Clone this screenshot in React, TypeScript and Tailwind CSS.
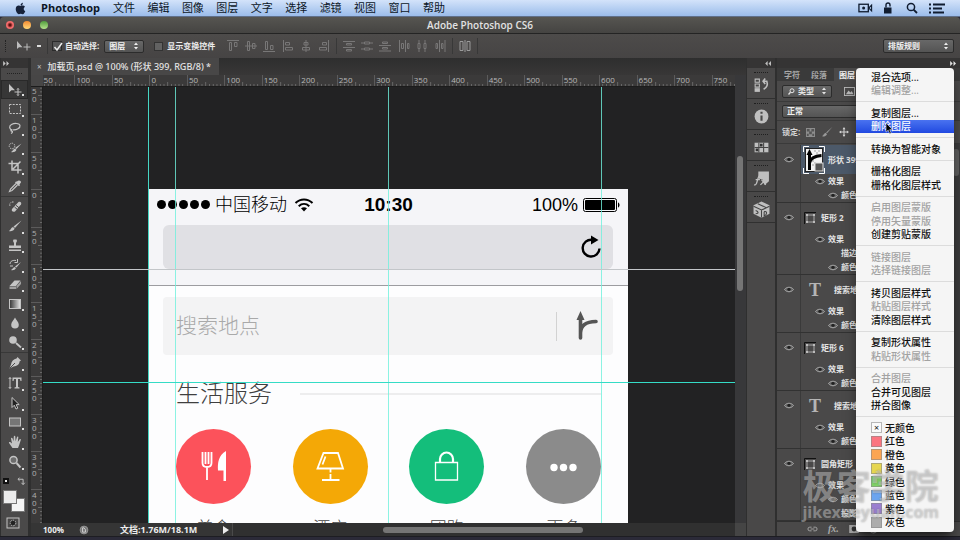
import { Fragment, type ReactNode } from 'react';
import { FaApple } from 'react-icons/fa';

type IconProps = { children: ReactNode; className?: string; box?: string };

function Icon({ children, className = 'size-[14px]', box = '0 0 14 14' }: IconProps) {
  return (
    <svg viewBox={box} className={`shrink-0 ${className}`} fill="none" stroke="currentColor" strokeWidth="1" aria-hidden="true">
      {children}
    </svg>
  );
}

const fill = { fill: 'currentColor', stroke: 'none' };

function UpDown() {
  return (
    <Icon box="0 0 6 8" className="pointer-events-none h-[8px] w-[6px]">
      <path {...fill} d="M3 0.5 5 3H1zM3 7.5 1 5h4z" />
    </Icon>
  );
}

function Select({ label, value, className }: { label: string; value: string; className: string }) {
  return (
    <span className={`flex items-center rounded-[2px] border border-[#2c2c2c] bg-linear-to-b from-[#686868] to-[#545454] pr-1 text-[#f0f0f0] ${className}`}>
      <select aria-label={label} className="min-w-0 flex-1 appearance-none bg-transparent pl-1 font-bold outline-none">
        <option>{value}</option>
      </select>
      <UpDown />
    </span>
  );
}

/* ---------- top bars ---------- */

const menus = ['文件', '编辑', '图像', '图层', '文字', '选择', '滤镜', '视图', '窗口', '帮助'];

function MenuBar() {
  return (
    <header className="flex h-[17px] shrink-0 items-center border-b border-[#5f6f8a] bg-linear-to-b from-[#d3e3fa] to-[#9bbcea] pr-[15px] pl-[14px] text-[11px] leading-4 text-[#0c1626]">
      <FaApple className="size-[13px] text-[#16223a]" />
      <span className="ml-[14px] w-[72px] font-bold">Photoshop</span>
      <nav className="flex w-[332px] justify-between">
        {menus.map((m) => (
          <button key={m}>{m}</button>
        ))}
      </nav>
      <div className="ml-auto flex items-center text-[#101c30]">
        <Icon box="0 0 16 12" className="h-[12px] w-[15px]">
          <rect x="1" y="2" width="10" height="8" strokeWidth="1.4" />
          <circle cx="6" cy="6" r="1.6" {...fill} />
          <path d="M11.5 6 14.5 3v6z" strokeWidth="1.2" />
        </Icon>
        <Icon box="0 0 10 12" className="ml-[10px] h-[12px] w-[10px]">
          <rect x="1" y="5.5" width="7.5" height="6" {...fill} />
          <path d="M3 5.5V3a2 2 0 0 1 4 0v1.5" strokeWidth="1.4" />
        </Icon>
        <Icon box="0 0 12 12" className="ml-[13px] size-[12px]">
          <circle cx="5" cy="5" r="3.6" strokeWidth="1.5" />
          <path d="M7.6 7.6 11 11" strokeWidth="1.8" />
        </Icon>
        <Icon box="0 0 16 12" className="ml-[11px] h-[12px] w-[16px]">
          <path d="M0 2.500h2M4 2.500h12M0 6.500h2M4 6.500h9M0 10.500h2M4 10.500h11" strokeWidth="2" />
        </Icon>
      </div>
    </header>
  );
}

function TitleBar() {
  return (
    <div className="grid h-[17px] shrink-0 grid-cols-3 items-center rounded-t-[4px] border-b border-[#242424] bg-linear-to-b from-[#565551] to-[#454442] px-[6px]">
      <div className="flex gap-[9px]">
        <button aria-label="关闭" className="size-[8px] rounded-full bg-radial from-[#5a0f0f] from-15% to-[#f26b6b] to-50%" />
        <button aria-label="最小化" className="size-[8px] rounded-full bg-linear-to-b from-[#f08a30] to-[#ffd978]" />
        <button aria-label="缩放" className="size-[8px] rounded-full bg-linear-to-b from-[#4f9c3c] to-[#b5e58c]" />
      </div>
      <h1 className="text-center text-[10px] leading-4 font-semibold text-[#e2e2e2]">Adobe Photoshop CS6</h1>
    </div>
  );
}

const alignIcons: ReactNode[][] = [
  [
    <path d="M1 1.500h12M3.500 3.500h2v8h-2z M8.500 3.500h2.500v4h-2.500z" />,
    <path d="M1 7h12M3.500 2.500h2v9h-2z M8.500 4.500h2.500v5h-2.500z" />,
    <path d="M1 12.500h12M3.500 2.500h2v8h-2z M8.500 6.500h2.500v4h-2.500z" />,
  ],
  [
    <path d="M2.500 1v12M4.500 3.500h4v2.500h-4z M4.500 8.500h7v2.500h-7z" />,
    <path d="M7 1v12M5 3.500h4v2.500h-4z M3.500 8.500h7v2.500h-7z" />,
    <path d="M11.500 1v12M5.500 3.500h4v2.500h-4z M2.500 8.500h7v2.500h-7z" />,
  ],
];

const distributeIcons: ReactNode[][] = [
  [
    <path d="M1 2.500h12M4.500 4.500h5v1.500h-5zM1 8.500h12M4.500 10.500h5v1.500h-5z" />,
    <path d="M1 4h3M10 4h3M4.500 3h5v2h-5zM1 10h3M10 10h3M4.500 9h5v2h-5z" />,
    <path d="M1 6.500h12M4.500 3h5v1.500h-5zM1 12h12M4.500 8.500h5v1.500h-5z" />,
  ],
  [
    <path d="M2.500 1v12M4.500 4.500h2v5h-2zM8.500 1v12M10.500 4.500h1.500v5h-1.500z" />,
    <path d="M4 1v3M4 10v3M3 4.500h2v5h-2zM10 1v3M10 10v3M9 4.500h2v5h-2z" />,
    <path d="M6.500 1v12M3 4.500h1.500v5h-1.500zM12 1v12M8.500 4.500h1.500v5h-1.500z" />,
  ],
];

function IconGroup({ icons }: { icons: ReactNode[] }) {
  return (
    <div className="flex gap-1 text-[#787777]">
      {icons.map((icon, i) => (
        <button key={i} aria-label="对齐">
          <Icon>{icon}</Icon>
        </button>
      ))}
    </div>
  );
}

function Divider() {
  return <span className="h-4 w-px bg-[#383838]" />;
}

function OptionsBar() {
  return (
    <div className="flex h-[24px] shrink-0 items-center bg-linear-to-b from-[#4d4b4a] to-[#464444] pr-[6px] pl-[5px] text-[8px] leading-3 font-bold text-[#ececec]">
      <span className="h-3 w-[2px] border-l border-dotted border-[#222]" />
      <Icon box="0 0 16 12" className="ml-[9px] h-[12px] w-[16px] text-[#bdbdbd]">
        <path {...fill} d="M1 1v8l2-1.800h3.500z" />
        <path d="M11 3.500v7M7.500 7h7" />
      </Icon>
      <span className="mr-[6px] ml-[5px] h-[2px] w-[4px] bg-[#ddd]" />
      <Divider />
      <label className="ml-[4px] flex items-center gap-[3px]">
        <span className="grid size-[10px] place-items-center border border-[#2b2b2b] bg-[#565656]">
          <input type="checkbox" defaultChecked className="peer col-start-1 row-start-1 size-[8px] appearance-none" />
          <Icon box="0 0 10 10" className="pointer-events-none invisible col-start-1 row-start-1 size-[10px] peer-checked:visible">
            <path d="M1.500 5 4 8 9 1" strokeWidth="1.5" />
          </Icon>
        </span>
        自动选择:
      </label>
      <Select label="自动选择" value="图层" className="ml-[5px] h-[13px] w-[40px]" />
      <label className="mr-[11px] ml-[10px] flex items-center gap-[4px]">
        <input type="checkbox" className="size-[9px] appearance-none border border-[#333] bg-[#626262]" />
        显示变换控件
      </label>
      <div className="flex items-center gap-[5px]">
        <IconGroup icons={alignIcons[0]} />
        <IconGroup icons={alignIcons[1]} />
        <Divider />
        <IconGroup icons={distributeIcons[0]} />
        <IconGroup icons={distributeIcons[1]} />
        <Divider />
        <button aria-label="自动对齐图层" className="text-[#9a9a9a]">
          <Icon>
            <path d="M2 2.500h3v9h-3zM7 1v12M9 2.500h3v9h-3z" />
          </Icon>
        </button>
        <Divider />
      </div>
      <Select label="工作区" value="排版规则" className="ml-auto h-[14px] w-[71px]" />
    </div>
  );
}

/* ---------- tool column ---------- */

type Tool = { name: string; icon: ReactNode };

const toolGroups: { height: string; tools: Tool[] }[] = [
  {
    height: 'h-[117px]',
    tools: [
      { name: '移动', icon: <><path {...fill} d="M1 1v8.500l2.400-2.200H7z" /><path d="M10 5.500v7M6.500 9h7M9 6.500l1-1 1 1M9 11.500l1 1 1-1" /></> },
      { name: '矩形选框', icon: <path d="M1.500 2.500h11v9h-11z" strokeDasharray="2 1.200" /> },
      { name: '套索', icon: <path d="M4.500 9C1 8.500.8 5 3.500 3.500s8-1.500 8.500 1-3.500 4.600-7 4.300M4.500 9c-1.800-.8-2 1.200-.8 1.200s1 1.600-.7 2.300" strokeWidth="1.200" /> },
      { name: '快速选择', icon: <><circle cx="4" cy="5" r="2.800" strokeDasharray="1.500 1" /><path {...fill} d="M13.500 2.500 8.500 8 7 7zM7 7.500l1.500 1.200C7.500 11 5 11.500 3 11c1.800-.8 2-2.800 4-3.500z" /></> },
      { name: '裁剪', icon: <path d="M4 .5v9.500h9.500M.5 3.500h9.500v10M5 9l7.500-7.500" strokeWidth="1.500" /> },
      { name: '吸管', icon: <><path {...fill} d="M9 2.500c1.500-2 4-1 4 .5 0 1-1 1.500-1.500 2.500l.5.700-1 1L7 3.500l1-1z" /><path d="M8 4.500 2.500 10l-1 2.500L4 11.500 9.500 6" strokeWidth="1.200" /></> },
    ],
  },
  {
    height: 'h-[156px]',
    tools: [
      { name: '污点修复', icon: <><path {...fill} d="m4 9 6.500-7c1.500-1 3.500.5 2.500 2.500L7 11.500c-2 1-4-.5-3-2.500z" /><path d="M5.500 2C3 1.500 1 3.500 2 6" strokeDasharray="1.500 1" /><path d="m6.500 7 3 2.500M8 5.300l3 2.500" stroke="#4a4a4a" /></> },
      { name: '画笔', icon: <path {...fill} d="M13.500 1.500 7 9 5.500 7.600zM5 8l1.600 1.500C6 12 3 12.500.8 12c2-.8 1.900-3.200 4.200-4z" /> },
      { name: '仿制图章', icon: <path {...fill} d="M5.500 1.500h3l.5 1.500-1 2v2.500h5V10H1V7.500h5V5L5 3zM1 11.500h12V13H1z" /> },
      { name: '历史记录画笔', icon: <><path {...fill} d="M13 4 8.500 9.500 7 8.500zM6.500 9l1.500 1c-1 2-3 2.500-5 2 1.800-.6 1.600-2.400 3.500-3z" /><path d="M2 6c0-3 3-4 6-3.500M9.500 1v3.500h-3M2 8h3" /></> },
      { name: '橡皮擦', icon: <><path {...fill} d="m1.500 9 5-5.500h6L8 9z" /><path {...fill} opacity=".7" d="M1.500 9.500H8V12H1.500zM8.500 9l4.500-5v3L8.500 12z" /></> },
      { name: '渐变', icon: <><defs><linearGradient id="ramp"><stop stopColor="#333" /><stop offset="1" stopColor="#e8e8e8" /></linearGradient></defs><rect x="1.500" y="2.500" width="11" height="9" fill="url(#ramp)" /></> },
      { name: '模糊', icon: <path {...fill} d="M7 1.500c1 2.500 3.800 4.700 3.800 7.200a3.800 3.800 0 0 1-7.600 0C3.200 6.200 6 4 7 1.500z" /> },
      { name: '减淡', icon: <><circle cx="5" cy="5" r="3.800" {...fill} /><path d="m8 8 5 4.500" strokeWidth="1.800" /></> },
    ],
  },
  {
    height: 'h-[119px]',
    tools: [
      { name: '钢笔', icon: <><path {...fill} d="m9.500 1 3.500 3.500-1.500 1c0 3-2.500 4.500-6 5L1.500 12.500 3 8.500c.5-3.500 2.500-5 5.500-6z" /><path d="m2 12 5-5" stroke="#4a4a4a" /></> },
      { name: '文字', icon: <><path {...fill} d="M4.500 1.500h9V5h-1l-.5-2h-2v8l1.500.500v1H6.500v-1l1.500-.500V3H6l-.500 2h-1z" /><path d="M2 1.500v11M.8 3 2 1.500 3.200 3M.8 11 2 12.500 3.200 11" /></> },
      { name: '路径选择', icon: <path d="M4 1.500v10l2.300-2.300L8 13l1.800-.8-1.600-3.600h3z" fill="#222" /> },
      { name: '矩形', icon: <rect x="1.500" y="3" width="11" height="8" fill="#767676" /> },
      { name: '抓手', icon: <path {...fill} d="M4.500 13 1 8c-.5-1 .8-1.500 1.500-.7L4 8.500 3 3.500c0-1 1.200-1 1.500-.2l1 3L5.800 1.500c.1-1 1.400-1 1.500 0l.3 4.700L9 2c.3-1 1.500-.7 1.300.3L9.800 7l1.700-2.500c.6-.8 1.600-.2 1.300.6L11 10.500 10 13z" /> },
      { name: '缩放', icon: <><circle cx="5.500" cy="5" r="3.600" strokeWidth="1.500" fill="#6d6d6d" /><path d="m8.500 8 4 4.500" strokeWidth="2" /></> },
    ],
  },
];

function ToolColumn() {
  return (
    <aside className="flex w-[31px] shrink-0 flex-col border-r-3 border-l border-[#2f2f2f] bg-[#4a4949] text-[#c4c4c4]">
      <div className="flex h-[10px] items-center bg-[#353434] pl-[2px]">
        <Icon box="0 0 8 6" className="h-[5px] w-[7px]"><path {...fill} d="M0 0 3 3 0 6zM4 0 7 3 4 6z" /></Icon>
      </div>
      <div className="mx-[6px] my-[5px] h-[2px] border-t border-dotted border-[#222]" />
      {toolGroups.map((g, gi) => (
        <div key={gi} className={`grid auto-rows-fr ${gi < 2 ? 'border-b border-[#383838]' : ''} ${g.height}`}>
          {g.tools.map((t, i) => (
            <button
              key={t.name}
              aria-label={t.name}
              className={`flex items-end justify-center ${gi === 0 && i === 0 ? 'border border-[#292929] bg-[#373737]' : ''}`}
            >
              <span className="w-[3px]" />
              <Icon className="size-[14px] self-center">{t.icon}</Icon>
              <span className="mb-[2px] size-[2px] bg-[#ddd]" />
            </button>
          ))}
        </div>
      ))}
      <div className="mt-1 flex h-[10px] items-center justify-between px-[2px]">
        <span className="size-[6px] border-2 border-[#111] bg-[#eee]" />
        <Icon className="size-[9px]"><path d="M4 1 1.500 3.500 4 6M2 3.500h7.500V11M7 9l2.500 3L12 9" strokeWidth="1.500" /></Icon>
      </div>
      <div className="mt-[4px] grid h-[22px] grid-cols-[8px_6px_8px] grid-rows-[8px_6px_8px] px-[2px]">
        <button aria-label="背景色" className="col-span-2 col-start-2 row-span-2 row-start-2 border border-[#777] bg-[#f4f4f4]" />
        <button aria-label="前景色" className="col-span-2 col-start-1 row-span-2 row-start-1 border border-[#777] bg-[#ececec]" />
      </div>
      <button aria-label="快速蒙版" className="mt-[5px] ml-[5px] self-start">
        <Icon box="0 0 14 12" className="h-[12px] w-[14px]">
          <rect x="1" y="1" width="12" height="10" />
          <circle cx="7" cy="6" r="2.800" fill="#222" strokeDasharray="1.500 1" />
        </Icon>
      </button>
    </aside>
  );
}

/* ---------- document window ---------- */

const rulerX = ['150', '100', '50', '0', '50', '100', '150', '200', '250', '300', '350', '400', '450', '500', '550', '600', '650', '700', '750'];
const rulerY = ['150', '100', '50', '0', '50', '100', '150', '200', '250', '300', '350', '400'];

function HorizontalRuler() {
  return (
    <div className="flex h-[12px] overflow-hidden border-b border-[#1c1c1c] bg-[#3b3a3a]">
      <span className="z-10 w-[12px] shrink-0 bg-[#474646]" />
      <div className="-ml-[6px] grid w-[712px] shrink-0 grid-cols-19 text-[8px] leading-[9px] text-[#b9b9b9]">
        {rulerX.map((n, i) => (
          <div key={i} className="grid">
            <svg viewBox="0 0 100 11" preserveAspectRatio="none" className="col-start-1 row-start-1 h-[11px] w-full" stroke="#777">
              <path d="M0 0v11" strokeWidth="3" />
              <path d="M10 9v2M20 9v2M30 9v2M40 9v2M50 7v4M60 9v2M70 9v2M80 9v2M90 9v2" strokeWidth="2" />
            </svg>
            <span className="col-start-1 row-start-1 pl-[2px]">{n}</span>
          </div>
        ))}
      </div>
    </div>
  );
}

function VerticalRuler() {
  return (
    <div className="w-[12px] shrink-0 overflow-hidden border-r border-[#1c1c1c] bg-[#3b3a3a]">
      <div className="-mt-[10px] grid h-[449px] grid-rows-12 text-[8px] leading-[8px] text-[#b0b0b0]">
        {rulerY.map((n, i) => (
          <div key={i} className="grid min-h-0">
            <svg viewBox="0 0 11 100" preserveAspectRatio="none" className="col-start-1 row-start-1 h-full w-[11px]" stroke="#777">
              <path d="M0 0h11" strokeWidth="3" />
              <path d="M9 10h2M9 20h2M9 30h2M9 40h2M7 50h4M9 60h2M9 70h2M9 80h2M9 90h2" strokeWidth="2" />
            </svg>
            <span className="col-start-1 row-start-1 w-[6px] pt-[2px] pl-px break-all">{n}</span>
          </div>
        ))}
      </div>
    </div>
  );
}

const services: { name: string; color: string; icon: ReactNode }[] = [
  {
    name: '美食',
    color: 'bg-[#fc525b]',
    icon: (
      <>
        <path d="M4.500 1v11c0 3 2 4 4.500 4s4.500-1 4.500-4V1M7.500 1v12M10.500 1v12M9 15v14" strokeWidth="1.800" />
        <path {...fill} d="M28 0v30h-2.500V19.500H20c-.5-8 .5-15 8-19.500z" />
      </>
    ),
  },
  {
    name: '酒店',
    color: 'bg-[#f4a806]',
    icon: <path d="M8.500 2h14.500l5 15.500H2.500zM10.500 5.500 7.500 13.500M15.500 18v3.500M15.500 23v6M7 29h17.500" strokeWidth="1.800" />,
  },
  {
    name: '团购',
    color: 'bg-[#14be7b]',
    icon: (
      <>
        <path d="M4.500 11.500h22V29h-22z" strokeWidth="1.300" />
        <path d="M9 11.500V8a6.500 6.500 0 0 1 13 0v3.500" strokeWidth="2.200" />
      </>
    ),
  },
  {
    name: '更多',
    color: 'bg-[#8b8b8b]',
    icon: <><circle cx="6" cy="16.500" r="3.700" {...fill} /><circle cx="15.500" cy="16.500" r="3.700" {...fill} /><circle cx="25" cy="16.500" r="3.700" {...fill} /></>,
  },
];

function Artboard() {
  return (
    <div className="mt-[102px] ml-[105px] h-[400px] w-[480px] bg-[#fdfdfe] font-['Liberation_Sans','Noto_Sans_CJK_SC',sans-serif] text-black">
      <div className="h-[97px] border-b border-[#9c9ca0] bg-[#f5f5f8] px-[15px]">
        <div className="-mr-[7px] -ml-[6px] flex h-[31px] items-center text-[18px] leading-6 whitespace-nowrap">
          <div className="flex flex-1 items-center">
            <span className="flex gap-[2px]">
              {[0, 1, 2, 3, 4].map((d) => (
                <span key={d} className="size-[9px] rounded-full bg-black" />
              ))}
            </span>
            <span className="ml-[5px] font-light">中国移动</span>
            <Icon box="0 0 20 14" className="ml-[7px] h-[14px] w-[20px]">
              <path d="M1.500 5c5-4.800 12-4.800 17 0M4.700 8.200c3.200-2.900 7.400-2.900 10.600 0" strokeWidth="2" />
              <path {...fill} d="M7 10.300c2-1.500 4-1.500 6 0L10 13.500z" />
            </Icon>
          </div>
          <span className="text-[19px] font-bold">10:30</span>
          <div className="flex flex-1 items-center justify-end gap-[5px]">
            100%
            <Icon box="0 0 37 14" className="h-[14px] w-[37px]">
              <rect x=".5" y=".5" width="33" height="13" rx="2" />
              <rect x="2" y="2" width="30" height="10" rx="1" {...fill} />
              <path {...fill} d="M35 4.500c2 .5 2 4.500 0 5z" />
            </Icon>
          </div>
        </div>
        <div className="mt-[5px] flex h-[44px] items-center rounded-[6px] bg-[#e0e0e4] pr-[11px]">
          <input aria-label="地址" className="h-full min-w-0 flex-1 bg-transparent" />
          <button aria-label="刷新">
            <Icon box="0 0 22 24" className="h-[24px] w-[22px]">
              <path d="M12 4.800A8.400 8.400 0 1 0 19.500 13.500" strokeWidth="2.400" />
              <path {...fill} d="M11 .5 18.500 5 11 9.500z" />
            </Icon>
          </button>
        </div>
      </div>
      <div className="mx-[15px] mt-[11px] flex h-[58px] items-center rounded-[4px] bg-[#f3f3f4] pr-[15px] pl-[13px]">
        <input aria-label="搜索" placeholder="搜索地点" className="min-w-0 flex-1 bg-transparent text-[21px] leading-8 font-light outline-none placeholder:text-[#a9a9a9]" />
        <span className="h-[29px] w-px bg-[#d2d2d2]" />
        <button aria-label="路线" className="ml-[17px] text-[#555]">
          <Icon box="0 0 24 30" className="h-[30px] w-[24px]">
            <path d="M6.500 27V7M6.500 22c.500-8 5-11 15.500-11.500" strokeWidth="3.600" strokeLinecap="round" />
            <path {...fill} d="M6.500 0 10.500 9h-8z" />
          </Icon>
        </button>
      </div>
      <div className="mr-[27px] ml-[28px]">
        <div className="mt-[21px] flex h-[36px] items-center gap-[28px]">
          <h2 className="text-[24px] leading-9 font-light text-[#3f3f3f]">生活服务</h2>
          <span className="h-[2px] flex-1 bg-[#ededee]" />
        </div>
        <div className="mt-[17px] flex justify-between">
          {services.map((s) => (
            <div key={s.name} className="flex flex-col items-center gap-[13px]">
              <div className={`grid size-[75px] place-items-center rounded-full text-white ${s.color}`}>
                <Icon box="0 0 31 31" className="size-[31px]">{s.icon}</Icon>
              </div>
              <span className="text-[17px] leading-6 font-light text-[#444]">{s.name}</span>
            </div>
          ))}
        </div>
      </div>
    </div>
  );
}

function Guides() {
  return (
    <div aria-hidden="true" className="pointer-events-none absolute inset-0">
      <span className="absolute inset-y-0 left-[105px] w-px bg-[#45d6c4]" />
      <span className="absolute inset-y-0 left-[132px] w-px bg-[#6ff0dc]/80" />
      <span className="absolute inset-y-0 left-[345px] w-px bg-[#6ff0dc]/80" />
      <span className="absolute inset-y-0 left-[558px] w-px bg-[#6ff0dc]/80" />
      <span className="absolute inset-x-0 top-[182px] h-px bg-[#c3c6c9]" />
      <span className="absolute inset-x-0 top-[295px] h-px bg-[#35dcc6]" />
    </div>
  );
}

function DocumentWindow() {
  return (
    <main className="flex min-w-0 flex-1 flex-col">
      <div className="flex h-[17px] shrink-0 bg-linear-to-b from-[#2e2e2e] to-[#383737]">
        <div className="flex items-center gap-[6px] bg-[#484747] pr-[8px] pl-[6px] font-['Noto_Sans','Noto_Sans_CJK_SC',sans-serif] text-[9px] leading-4 font-medium text-[#e4e4e4]">
          <button aria-label="关闭文档" className="text-[8px] text-[#bbb]">×</button>
          加载页.psd @ 100% (形状 399, RGB/8) *
        </div>
      </div>
      <div className="flex min-h-0 flex-1">
        <div className="flex min-w-0 flex-1 flex-col">
          <HorizontalRuler />
          <div className="flex min-h-0 flex-1">
            <VerticalRuler />
            <div className="relative min-w-0 flex-1 overflow-hidden bg-[#222223]">
              <Artboard />
              <Guides />
            </div>
          </div>
        </div>
        <div className="w-[11px] shrink-0 bg-[#38383a] px-[2px] pt-[81px]">
          <div className="h-[135px] w-[6px] rounded-full bg-[#757575]" />
        </div>
      </div>
      <footer className="flex h-[13px] shrink-0 items-center bg-[#353535] pl-[12px] text-[8px] leading-3 font-bold text-[#ededed]">
        <span className="w-[36px]">100%</span>
        <Icon className="size-[10px] text-[#a5a5a5]">
          <circle cx="7" cy="7" r="5.500" fill="#777" /><path d="M5 4v6h4V6.500L7 4z" stroke="#eee" />
        </Icon>
        <span className="ml-[31px] w-[103px] text-[9px]">文档:1.76M/18.1M</span>
        <Icon box="0 0 6 8" className="h-[8px] w-[6px]"><path {...fill} d="M0 0 6 4 0 8z" /></Icon>
        <span className="ml-[3px] flex h-full flex-1 items-center border-l border-[#4a4a4a] bg-[#303030] pl-[150px]">
          <span className="h-[6px] w-[200px] rounded-full bg-[#757575]" />
        </span>
        <span className="h-full w-[11px] bg-[#454545]" />
      </footer>
    </main>
  );
}

/* ---------- right side ---------- */

const dockIcons: { name: string; icon: ReactNode }[] = [
  { name: '历史记录', icon: <><path d="M2 2h4v3H2zM2 6.500h4v3H2z" /><path {...fill} d="M1.500 10.500h5v3.500h-5z" /><path d="M9.500 4h3.500c1 3 0 6-3 7.500M11.500 1.500 9.500 4l2 2.500" strokeWidth="1.500" /></> },
  { name: '信息', icon: <><circle cx="8" cy="8" r="6.500" {...fill} /><path d="M8 7v5M8 3.500v2" stroke="#4a4a4a" strokeWidth="2" /></> },
  { name: '色板', icon: <><path {...fill} d="M1.500 3.500h13v9h-13z" /><path d="M5.500 3.500v9M10 3.500v9M1.500 8h13" stroke="#444" /><path fill="#333" stroke="none" d="M2.500 9h2.500v2.500H2.500zM6.500 4.500H9V7H6.500z" /></> },
  { name: '样式', icon: <><path {...fill} d="M5 1.500h10v9L11 14 9 9 5 8z" /><path d="M1 14c3 1 3-6 4.500-8 .5-1 1.500-1 2-.5M2.500 9h4M8 9l4 5M12 9l-5 5" strokeWidth="1.200" /></> },
  { name: '3D', icon: <><path {...fill} d="M8 .5 15.500 4v8L8 15.800.5 12V4z" /><path d="M.5 5 8 8.500 15.500 5M8 8.500v7M4.500 2.500 12 6M2.500 9c3 1 3 3 0 3M10.500 10v4c3-1 3-5 0-4" stroke="#444" /></> },
];

function IconDock() {
  return (
    <aside className="flex w-[31px] shrink-0 flex-col border-r-2 border-l border-[#2f2f2f] bg-[#494848] text-[#bfbfbf]">
      <div className="flex h-[10px] items-center justify-end bg-[#353434] pr-[3px]">
        <Icon box="0 0 8 6" className="h-[5px] w-[7px]"><path {...fill} d="M3 0v6L0 3zM7 0v6L4 3z" /></Icon>
      </div>
      {dockIcons.map((d) => (
        <button key={d.name} aria-label={d.name} className="flex h-[31px] flex-col items-center border-b border-[#303030]">
          <span className="mt-[4px] mb-[4px] h-px w-[14px] border-t border-dotted border-[#1f1f1f]" />
          <Icon box="0 0 16 16" className="size-[17px]">{d.icon}</Icon>
        </button>
      ))}
    </aside>
  );
}

function Eye() {
  return (
    <Icon box="0 0 10 7" className="h-[7px] w-[10px] text-[#a9a9a9]">
      <path d="M.5 3.500C2.500.500 7.500.500 9.500 3.500 7.500 6.500 2.500 6.500.5 3.500z" fill="#666" />
      <circle cx="5" cy="3.300" r="1.600" fill="#222" stroke="none" />
    </Icon>
  );
}

type Layer = { name: string; kind: 'thumb' | 'shape' | 'text'; effects: { name: string; eye: boolean }[] };

const colorFx = { name: '颜色叠加', eye: true };
const layers: Layer[] = [
  { name: '形状 399', kind: 'thumb', effects: [colorFx] },
  { name: '矩形 2', kind: 'shape', effects: [{ name: '描边', eye: false }, colorFx] },
  { name: '搜索地点', kind: 'text', effects: [colorFx] },
  { name: '矩形 6', kind: 'shape', effects: [colorFx] },
  { name: '搜索地点', kind: 'text', effects: [colorFx] },
  { name: '圆角矩形', kind: 'shape', effects: [colorFx, { name: '投影', eye: false }] },
];

function LayerThumb({ kind }: { kind: Layer['kind'] }) {
  if (kind === 'thumb') {
    return (
      <Icon box="0 0 22 28" className="mr-[3px] ml-[2px] h-[28px] w-[22px]">
        <rect x="2.500" y="2.500" width="17" height="23" fill="#f2f2f2" stroke="#222" />
        <path fill="#c9c9c9" stroke="none" d="M11 4h2v2h-2zM15 4h2v2h-2zM13 6h2v2h-2zM9 14h2v2H9zM11 16h2v2h-2zM9 18h2v2H9z" />
        <path d="M6.500 24V7M6.500 17c1-5 5-7 12-7.500" stroke="#000" strokeWidth="3" />
        <path fill="#000" stroke="none" d="M6.500 3 9.500 9h-6z" />
        <rect x="12" y="17" width="8" height="8" fill="#555" stroke="#ddd" />
        <path d="M.5 6V.5H6M16 .5h5.500V6M21.500 22v5.500H16M6 27.500H.5V22" stroke="#fff" />
      </Icon>
    );
  }
  if (kind === 'text') {
    return <span className="w-[33px] pl-[8px] font-['Liberation_Serif',serif] text-[18px] leading-5 font-bold text-[#b5b5b5]">T</span>;
  }
  return (
    <Icon box="0 0 12 12" className="mr-[5px] ml-[3px] size-[12px]">
      <path d="M.5 12V.5H12" stroke="#111" />
      <path d="M3 3h7v7H3z" stroke="#a8a8a8" />
      <path fill="#bcbcbc" stroke="none" d="M2 2h2v2H2zM9 2h2v2H9zM2 9h2v2H2zM9 9h2v2H9z" />
    </Icon>
  );
}

function LayerRow({ layer, selected }: { layer: Layer; selected: boolean }) {
  return (
    <li className="flex border-b border-[#323232]">
      <div className="flex w-[24px] shrink-0 justify-center border-r border-[#3a3a3a] pt-[11px]">
        <Eye />
      </div>
      <div className="min-w-0 flex-1">
        <div className={`flex h-[29px] items-center ${selected ? 'bg-[#4c5969]' : ''}`}>
          <LayerThumb kind={layer.kind} />
          {layer.name}
        </div>
        <div className="flex h-[14px] items-center gap-[3px] pl-[14px]">
          <Eye />
          效果
        </div>
        {layer.effects.map((e) => (
          <div key={e.name} className="flex h-[14px] items-center pl-[27px]">
            <span className="w-[13px]">{e.eye && <Eye />}</span>
            {e.name}
          </div>
        ))}
      </div>
    </li>
  );
}

function LayersPanel() {
  return (
    <aside className="flex w-[183px] shrink-0 flex-col bg-[#4a4949] text-[8px] leading-3 font-bold text-[#e4e4e4]">
      <div className="flex h-[10px] items-center justify-end bg-[#353434] pr-[3px]">
        <Icon box="0 0 8 6" className="h-[5px] w-[7px]"><path {...fill} d="M0 0 3 3 0 6zM4 0 7 3 4 6z" /></Icon>
      </div>
      <div role="tablist" className="flex h-[13px] bg-[#3a3a3a] text-[#a8a8a8]">
        <button role="tab" className="px-[7px]">字符</button>
        <button role="tab" className="pr-[7px] pl-[4px]">段落</button>
        <button role="tab" aria-selected="true" className="bg-[#4a4949] px-[5px] text-[#f0f0f0]">图层</button>
      </div>
      <div className="flex h-[21px] items-center border-b border-[#3a3a3a] pl-[5px]">
        <span className="flex h-[13px] w-[50px] items-center rounded-[2px] border border-[#2c2c2c] bg-linear-to-b from-[#686868] to-[#545454] pr-1 pl-[5px]">
          <Icon className="size-[7px]"><circle cx="8" cy="5.500" r="4" strokeWidth="2" /><path d="M5 8.500 1 13" strokeWidth="2.500" /></Icon>
          <select aria-label="过滤类型" className="min-w-0 flex-1 appearance-none bg-transparent pl-[3px] font-bold outline-none">
            <option>类型</option>
          </select>
          <UpDown />
        </span>
        <Icon box="0 0 12 10" className="ml-[12px] h-[9px] w-[11px] text-[#bbb]">
          <rect x=".5" y=".5" width="11" height="9" /><path {...fill} d="m2 8 3-4 2 2 1.500-1.500L10.500 8z" />
        </Icon>
      </div>
      <div className="flex h-[19px] items-center border-b border-[#3a3a3a] pl-[5px]">
        <Select label="混合模式" value="正常" className="h-[13px] w-[100px]" />
      </div>
      <div className="flex h-[23px] items-center gap-[6px] border-b border-[#3a3a3a] pl-[5px] text-[#d6d6d6]">
        锁定:
        <Icon box="0 0 10 10" className="size-[9px] text-[#8d8d8d]">
          <path {...fill} d="M0 0h10v10H0z" /><path fill="#555" stroke="none" d="M1 1h3v3H1zM6 1h3v3H6zM3.500 4h3v3h-3zM1 6.500h2V9H1zM7 6.500h2V9H7z" />
        </Icon>
        <Icon className="size-[12px] text-[#999]"><path {...fill} d="M13.500 1 7 8.500 6 7.500zM5.500 8l1.500 1.500C6 12 3 12.500 1 12c2-.8 2-3 4.500-4z" /></Icon>
        <Icon className="size-[10px]">
          <path d="M7 2v10M2 7h10" strokeWidth="1.400" /><path {...fill} d="M7 0l2 3H5zM7 14l2-3H5zM0 7l3-2v4zM14 7l-3-2v4z" />
        </Icon>
      </div>
      <div className="flex min-h-0 flex-1">
        <ul className="min-w-0 flex-1 overflow-hidden pt-px whitespace-nowrap">
          {layers.map((l, i) => (
            <LayerRow key={i} layer={l} selected={i === 0} />
          ))}
        </ul>
        <div className="w-[7px] bg-[#3b3b3c] pt-[5px] pr-px">
          <div className="h-[27px] rounded-full bg-[#5e5e5e]" />
        </div>
      </div>
      <div className="flex h-[15px] items-center gap-[10px] border-t border-[#303030] pl-[30px] text-[#a9a9a9]">
        <Icon box="0 0 12 6" className="h-[6px] w-[11px]"><path d="M5 1H3a2 2 0 0 0 0 4h2M7 1h2a2 2 0 0 1 0 4H7M4 3h4" /></Icon>
        <span className="font-['Liberation_Serif',serif] text-[10px] italic">fx.</span>
        <Icon box="0 0 12 10" className="h-[8px] w-[10px]"><path {...fill} d="M0 0h12v10H0z" /><circle cx="6" cy="5" r="3" fill="#333" stroke="none" /></Icon>
        <Icon box="0 0 10 10" className="size-[9px]"><circle cx="5" cy="5" r="4" /><path {...fill} d="M5 1a4 4 0 0 1 0 8z" /></Icon>
      </div>
    </aside>
  );
}

type Entry = { label: string; off?: boolean; active?: boolean; swatch?: string };

const menuGroups: Entry[][] = [
  [{ label: '混合选项...' }, { label: '编辑调整...', off: true }],
  [{ label: '复制图层...' }, { label: '删除图层', active: true }],
  [{ label: '转换为智能对象' }],
  [{ label: '栅格化图层' }, { label: '栅格化图层样式' }],
  [{ label: '启用图层蒙版', off: true }, { label: '停用矢量蒙版', off: true }, { label: '创建剪贴蒙版' }],
  [{ label: '链接图层', off: true }, { label: '选择链接图层', off: true }],
  [{ label: '拷贝图层样式' }, { label: '粘贴图层样式', off: true }, { label: '清除图层样式' }],
  [{ label: '复制形状属性' }, { label: '粘贴形状属性', off: true }],
  [{ label: '合并图层', off: true }, { label: '合并可见图层' }, { label: '拼合图像' }],
  [
    { label: '无颜色', swatch: 'bg-[#fafafa]' },
    { label: '红色', swatch: 'bg-[#fb7480]' },
    { label: '橙色', swatch: 'bg-[#fba552]' },
    { label: '黄色', swatch: 'bg-[#e6d650]' },
    { label: '绿色', swatch: 'bg-[#7fd165]' },
    { label: '蓝色', swatch: 'bg-[#6ba5f0]' },
    { label: '紫色', swatch: 'bg-[#9b7fd0]' },
    { label: '灰色', swatch: 'bg-[#acacac]' },
  ],
];

function ContextMenu() {
  return (
    <div role="menu" className="absolute top-[10px] right-[6px] bottom-[4px] flex w-[98px] flex-col rounded-[4px] bg-[#f5f5f5] pt-[2px] pb-[3px] text-[10px] leading-3 font-medium text-[#111] shadow-lg shadow-black/50">
      {menuGroups.map((group, gi) => (
        <Fragment key={gi}>
          {gi > 0 && (
            <div role="separator" className="flex h-[9px] shrink-0 items-center">
              <span className="h-px w-full bg-[#dcdcdc]" />
            </div>
          )}
          {group.map((e) => (
            <button
              key={e.label}
              role="menuitem"
              disabled={e.off}
              className={`flex min-h-0 flex-1 items-center gap-[3px] pl-[15px] whitespace-nowrap disabled:text-[#a2a2a2] ${
                e.active ? 'bg-linear-to-b from-[#4a72f0] to-[#2148e0] text-white' : ''
              }`}
            >
              {e.swatch && (
                <span className={`grid size-[11px] place-items-center border border-[#8a8a8a]/60 text-[9px] leading-none ${e.swatch}`}>
                  {e.label === '无颜色' && '×'}
                </span>
              )}
              {e.label}
            </button>
          ))}
        </Fragment>
      ))}
    </div>
  );
}

export default function App() {
  return (
    <div lang="zh-CN" className="flex h-screen flex-col overflow-hidden bg-[#2b2a38] font-['Open_Sans','Noto_Sans_CJK_SC',sans-serif]">
      <MenuBar />
      <TitleBar />
      <OptionsBar />
      <div className="relative flex min-h-0 flex-1 bg-[#333]">
        <ToolColumn />
        <DocumentWindow />
        <IconDock />
        <LayersPanel />
        <ContextMenu />
        <Icon box="0 0 8 13" className="pointer-events-none absolute right-[67px] bottom-[401px] h-[13px] w-[8px]">
          <path d="M1 .8v9.400l2.200-2 1.500 3.600 1.500-.7-1.500-3.400h2.800z" fill="#000" stroke="#dfe6ff" strokeWidth=".6" />
        </Icon>
        <div className="pointer-events-none absolute right-[21px] bottom-[16px] text-center font-bold text-[#e8e8e8]/40 text-shadow-[0_0_2px_rgb(70_70_70/0.4)]">
          <p className="text-[34px] leading-9">极客学院</p>
          <p className="text-[16px] leading-4">jikexueyuan.com</p>
        </div>
      </div>
      <div className="h-[4px] shrink-0 border-t border-[#1d1d22]" />
    </div>
  );
}
